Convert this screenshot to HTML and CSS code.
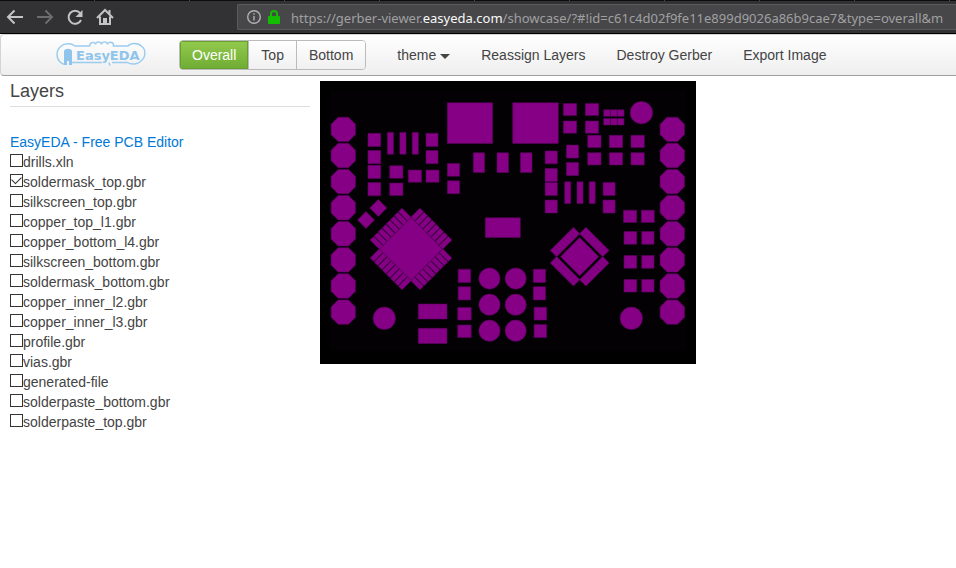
FILE: index.html
```html
<!DOCTYPE html>
<html lang="en">
<head>
<meta charset="utf-8">
<title>EasyEDA Gerber Viewer</title>
<link rel="stylesheet" href="styles.css">
</head>
<body>
<header class="browser">
  <div class="browser-buttons">
    <button type="button" aria-label="Back"><svg viewBox="0 0 18 18"><path d="M17 9H2M8.500 2.500 2 9l6.500 6.500"/></svg></button>
    <button type="button" aria-label="Forward" disabled><svg viewBox="0 0 18 18"><path d="M1 9h15M9.500 2.500 16 9l-6.500 6.500"/></svg></button>
    <button type="button" aria-label="Reload"><svg viewBox="0 0 18 18"><path d="M14 5A6.500 6.500 0 1 0 15 12"/><path class="solid" d="M16.500 2v7H9.500z"/></svg></button>
    <button type="button" aria-label="Home"><svg viewBox="0 0 18 18"><path d="M1 10 9 2l8 8M4 8.500V16h10V8.500M13.500 2v4"/><path class="solid" d="M7 10h4v6H7z"/></svg></button>
  </div>
  <div class="address" role="textbox" aria-label="Address">
    <svg class="info" viewBox="0 0 14 14"><circle cx="7" cy="7" r="6.300"/><path d="M7 6v4.500M7 3.300v1.500"/></svg>
    <svg class="lock" viewBox="0 0 12 14"><path class="shackle" d="M3 7V4a3 3 0 0 1 6 0v3"/><rect y="6" width="12" height="8" rx="1"/></svg>
    <span class="url">https://gerber-viewer.<b>easyeda.com</b>/showcase/?#!id=c61c4d02f9fe11e899d9026a86b9cae7&amp;type=overall&amp;m</span>
  </div>
</header>

<nav class="toolbar">
  <a class="logo" href="#" aria-label="EasyEDA">
    <svg viewBox="0 0 90 26">
      <path class="outline" d="M34 4H19C15 .8 8 1 4 5c-4 4-4 11 0 15 1.500 1.500 3 2.200 5 2.500M15 20.500h31M56 20.500h15.500c4 2.500 10 2 13.500-1.500 5-4 5-11 1-14.500-4-4-11-4-14-.5H57.500c.5-4.500-5.500-5-6-1.500-.5-3.500-5.500-3.500-6 0-.5-3.500-5.500-3.500-6 0-.5-3-6-3-5.500 1.500"/>
      <path class="solid" d="M8 9c1-3 7-3 8 0v14h-3v-4h-2v4H8z"/>
      <text x="20" y="18">EasyEDA</text>
      <path class="outline" d="M53 20.500l1 3"/>
    </svg>
  </a>
  <div class="group">
    <button type="button" class="active">Overall</button>
    <button type="button">Top</button>
    <button type="button">Bottom</button>
  </div>
  <div class="menu">
    <a href="#">theme<span class="caret"></span></a>
    <a href="#">Reassign Layers</a>
    <a href="#">Destroy Gerber</a>
    <a href="#">Export Image</a>
  </div>
</nav>

<main class="content">
  <aside class="sidebar">
    <h1>Layers</h1>
    <a class="promo" href="#">EasyEDA - Free PCB Editor</a>
    <label><input type="checkbox">drills.xln</label>
    <label><input type="checkbox" checked>soldermask_top.gbr</label>
    <label><input type="checkbox">silkscreen_top.gbr</label>
    <label><input type="checkbox">copper_top_l1.gbr</label>
    <label><input type="checkbox">copper_bottom_l4.gbr</label>
    <label><input type="checkbox">silkscreen_bottom.gbr</label>
    <label><input type="checkbox">soldermask_bottom.gbr</label>
    <label><input type="checkbox">copper_inner_l2.gbr</label>
    <label><input type="checkbox">copper_inner_l3.gbr</label>
    <label><input type="checkbox">profile.gbr</label>
    <label><input type="checkbox">vias.gbr</label>
    <label><input type="checkbox">generated-file</label>
    <label><input type="checkbox">solderpaste_bottom.gbr</label>
    <label><input type="checkbox">solderpaste_top.gbr</label>
  </aside>
  <svg class="board" viewBox="0 1 376 283" role="img" aria-label="Solder mask, top layer">
    <defs>
      <path id="oct" d="M-5.200-12.200H5.200L12.200-5.200V5.200L5.200 12.200H-5.200L-12.200 5.200V-5.200z"/>
      <g id="octs">
        <use href="#oct" y="49.400"/><use href="#oct" y="75.500"/><use href="#oct" y="101.600"/><use href="#oct" y="127.700"/>
        <use href="#oct" y="153.800"/><use href="#oct" y="179.900"/><use href="#oct" y="206"/><use href="#oct" y="232.100"/>
      </g>
      <path id="pins" d="M-35.200-22.500h13v5h-13zm0 5.720h13v5h-13zm0 5.720h13v5h-13zm0 5.720h13v5h-13zm0 5.720h13v5h-13zm0 5.720h13v5h-13zm0 5.720h13v5h-13zm0 5.720h13v5h-13z"/>
      <g id="row">
        <path d="M-25.200-16.400h9v32.800h-9z"/>
        <path class="split" d="M-25-12.300h8.600M-25-8.200h8.600M-25-4.100h8.600M-25 0h8.600M-25 4.100h8.600M-25 8.200h8.600M-25 12.300h8.600"/>
      </g>
    </defs>
    <rect class="back" y="1" width="376" height="283"/>
    <rect class="substrate" x="10" y="11" width="356" height="260"/>
    <g class="pads">
      <use href="#octs" x="23.300"/><use href="#octs" x="352.300"/>
      <path d="M127.300 22.700h45.300v40.700h-45.300zM192.700 22.700h45.600v40.700h-45.600zM165.300 137.700h35v19.700h-35zM98.300 224h28.700v15h-28.700zM98.300 248.300h28.700v15.200h-28.700z"/>
      <path d="M48 53.300h12.700v13.200H48zM48 70.500h12.700v13.200H48zM48 85.300h12.700v13.200H48zM48 102.600h12.700v13.200H48zM106 53.300h12v13.200h-12zM106 70.500h12v13.200h-12z"/>
      <path d="M67.400 52.400h6.200v21.800h-6.200zM79.800 52.400h6.200v21.800h-6.200zM92.200 52.400h6.200v21.800h-6.200z"/>
      <path d="M69.700 85.700h13.200v12.500h-13.200zM69.700 103.100h13.200v12.500h-13.200zM88.300 90.100h13.200v12.200h-13.200zM106 90.100h13v12.200h-13z"/>
      <path d="M58.300 119.500l8.500 8.500-8.500 8.500-8.500-8.500zM46 131.500l8.500 8.500-8.500 8.500-8.500-8.500z"/>
      <path d="M153.300 72.800h11.300v19.800h-11.300zM177 72.800h11.500v19.800H177zM200.500 72.800h11.500v19.800h-11.500z"/>
      <path d="M127.400 83.400h12.200v12.900h-12.200zM127.400 100.800h12.200v12.900h-12.200zM225.100 70.900h12.200v12.900h-12.200zM225.100 88.400h12.200v13.200h-12.200zM225.100 102.400h12.200v13.200h-12.200zM225.100 120.100h12.200v12.900h-12.200z"/>
      <path d="M243.400 23.400h13.200v12.200h-13.200zM265.400 23.400h13.200v12.200h-13.200zM243.400 41h13.200v12.200h-13.200zM265.400 41h13.200v12.200h-13.200z"/>
      <path d="M283.700 29.800h6.500v6.500h-6.500zM290.600 29.800h6.500v6.500h-6.500zM297.500 29.800h6.500v6.500h-6.500zM283.700 38.500h6.500v6.500h-6.500zM290.600 38.500h6.500v6.500h-6.500zM297.500 38.500h6.500v6.500h-6.500z"/>
      <path d="M267.700 55.300h13.300v12.200h-13.300zM289.300 55.300h13.300v12.200h-13.300zM311 55.300h13.300v12.200H311zM267.700 72.700h13.300v12.200h-13.300zM289.300 72.700h13.300v12.200h-13.300zM311 72.700h13.300v12.200H311z"/>
      <path d="M246.400 65.100h12.200v12.900h-12.200zM246.400 82.500h12.200v13h-12.200zM283.100 102.400h12v13.200h-12zM283.100 120.100h12v12.900h-12z"/>
      <path d="M244.700 101.800h6v21.800h-6zM257 101.800h6v21.800h-6zM269.200 101.800h6v21.800h-6z"/>
      <path d="M303.500 130.200h13.200v12.200h-13.200zM321.300 130.200h13v12.200h-13zM304 151.400h12.700v12.900H304zM321.700 151.400H334v12.900h-12.300zM304 175.400h12.700v12.900H304zM321.700 175.400H334v12.900h-12.300zM304 199.400h12.700v12.700H304zM321.700 199.400H334v12.700h-12.300z"/>
      <path d="M138.200 189.200h12.400v13.300h-12.400zM138.200 206.700h12.400v13.200h-12.400zM137.700 227.400h13.500v12.600h-13.500zM137.700 245.100h13.500v12.500h-13.500zM213.400 189.200h12.200v13.300h-12.200zM213.400 206.700h12.200v13.200h-12.200zM214.100 227.200h12.500v12.900h-12.500zM214.100 244.600h12.500v13h-12.500z"/>
      <circle cx="321.400" cy="32.700" r="11.200"/><circle cx="64.300" cy="238.300" r="11.200"/><circle cx="311.300" cy="238.300" r="11.200"/>
      <circle cx="169.500" cy="198.600" r="10.600"/><circle cx="169.500" cy="224.700" r="10.600"/><circle cx="169.500" cy="250.700" r="10.600"/>
      <circle cx="195.700" cy="198.600" r="10.600"/><circle cx="195.700" cy="224.700" r="10.600"/><circle cx="195.700" cy="250.700" r="10.600"/>
      <g transform="translate(91 169) rotate(45)">
        <use href="#pins"/><use href="#pins" transform="rotate(90)"/><use href="#pins" transform="rotate(180)"/><use href="#pins" transform="rotate(270)"/>
        <path d="M-22.300-22.300h44.600v44.600h-44.600z"/>
      </g>
      <g transform="translate(259.700 176.700) rotate(45)">
        <use href="#row"/><use href="#row" transform="rotate(90)"/><use href="#row" transform="rotate(180)"/><use href="#row" transform="rotate(270)"/>
        <path d="M-13.500-13.500h27v27h-27z"/>
      </g>
    </g>
  </svg>
</main>
</body>
</html>
```

FILE: styles.css
```css
* {
  box-sizing: border-box;
}

body {
  margin: 0;
  background: #fff;
  color: #444;
  font: 14px/20px "Liberation Sans", Arial, sans-serif;
}

a {
  color: inherit;
  text-decoration: none;
}

button {
  font: inherit;
}

.browser {
  display: flex;
  height: 34px;
  padding-top: 1px;
  background: repeating-linear-gradient(90deg, #0c0c0d 0 94px, #4a4a4c 94px 95px) top / 100% 1px no-repeat #323234;
  border-bottom: 1px solid #000;
  overflow: hidden;
}

.browser-buttons {
  display: flex;
  flex: none;
  align-items: center;
  gap: 12px;
  width: 237px;
  padding-left: 6px;
}

.browser-buttons button {
  display: flex;
  padding: 0;
  border: 0;
  background: none;
}

.browser-buttons svg {
  width: 18px;
  height: 18px;
  fill: none;
  stroke: #c4c4c5;
  stroke-width: 2;
}

.browser-buttons .solid {
  fill: #c4c4c5;
  stroke: none;
}

.browser-buttons button:disabled svg {
  stroke: #6d6d6f;
}

.address {
  display: flex;
  flex: 1;
  align-items: center;
  min-width: 0;
  height: 26px;
  margin-top: 3px;
  padding-left: 9px;
  overflow: hidden;
  border: 1px solid #5b5b5e;
  border-right: 0;
  border-radius: 2px 0 0 2px;
  background: #474749;
}

.address svg {
  flex: none;
  height: 14px;
}

.info {
  width: 14px;
  margin-right: 7px;
  fill: none;
  stroke: #b1b1b3;
  stroke-width: 1.4;
}

.lock {
  width: 12px;
  margin-right: 11px;
  fill: #12bc00;
}

.lock .shackle {
  fill: none;
  stroke: #12bc00;
  stroke-width: 2;
}

.url {
  padding-top: 2px;
  color: #a0a0a2;
  font: 13px/20px "Noto Sans", sans-serif;
  white-space: nowrap;
}

.url b {
  color: #f9f9fa;
  font-weight: 400;
}

.toolbar {
  display: flex;
  align-items: center;
  height: 42px;
  border: 1px solid #d4d4d4;
  border-bottom-color: #a0a0a0;
  border-right: 0;
  border-radius: 4px 0 0 4px;
  background: linear-gradient(#fff, #eee);
}

.logo {
  margin: 0 33px 0 55px;
}

.logo svg {
  display: block;
  width: 90px;
  height: 26px;
  overflow: visible;
}

.logo .outline {
  fill: none;
  stroke: #9accef;
  stroke-width: 1.4;
}

.logo .solid,
.logo text {
  fill: #8fc5ec;
}

.logo text {
  font: bold 13px "DejaVu Sans", sans-serif;
}

.group {
  display: flex;
  border: 1px solid #bbb;
  border-radius: 4px;
  overflow: hidden;
}

.group button {
  height: 28px;
  padding: 0 12px;
  border: 0;
  border-left: 1px solid #bbb;
  background: linear-gradient(#fff, #f0f0f0);
  color: #444;
}

.group .active {
  border-left: 0;
  background: linear-gradient(#92ca4c, #6fac34);
  box-shadow: inset 0 0 0 1px #67a02f;
  color: #fff;
}

.menu {
  display: flex;
}

.menu a {
  padding: 0 0 0 31px;
}

.caret {
  display: inline-block;
  margin-left: 4px;
  vertical-align: middle;
  border: 5px solid transparent;
  border-top-color: #444;
  border-bottom: 0;
}

.content {
  display: flex;
  align-items: flex-start;
  gap: 10px;
  padding: 5px 10px;
}

.sidebar {
  display: flex;
  flex: none;
  flex-direction: column;
  width: 300px;
}

.sidebar h1 {
  margin: 0 0 25px;
  padding-bottom: 5px;
  border-bottom: 1px solid #ddd;
  color: #444;
  font-size: 18px;
  font-weight: 400;
  line-height: 20px;
}

.promo {
  color: #0078d7;
}

.sidebar label {
  display: flex;
  align-items: flex-start;
  height: 20px;
}

.sidebar input {
  appearance: none;
  display: flex;
  width: 13px;
  height: 13px;
  margin: 2px 0 0;
  border: 1px solid #333;
  background: #fff;
}

.sidebar input:checked::after {
  content: "";
  width: 9px;
  height: 5px;
  margin: 1px;
  border: solid #333;
  border-width: 0 0 1px 1px;
  transform: rotate(-45deg);
}

.board {
  flex: 0 1 376px;
  min-width: 0;
}

.substrate {
  fill: #030104;
}

.pads {
  fill: #850085;
  stroke: #5a005c;
  stroke-width: .6;
}

.split {
  stroke: #6d006e;
}
```
